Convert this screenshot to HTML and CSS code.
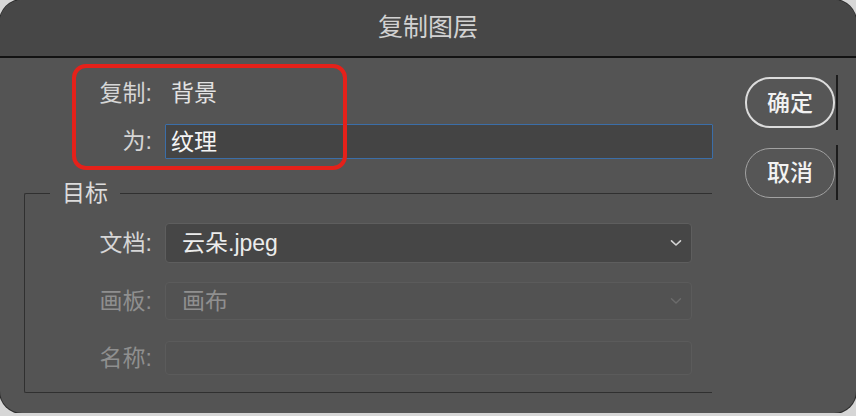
FILE: index.html
```html
<!DOCTYPE html>
<html lang="zh-CN">
<head>
<meta charset="UTF-8" />
<meta name="viewport" content="width=device-width, initial-scale=1" />
<title>复制图层</title>
<link rel="stylesheet" href="styles.css">
</head>
<body>

<div class="dialog">
  <div class="titlebar">复制图层</div>

  <div class="main">
    <div class="form">
      <div class="row row-top">
        <span class="label">复制:</span>
        <span class="value">背景</span>
      </div>
      <div class="row row-top">
        <label class="label" for="layerName">为:</label>
        <input class="text-input" id="layerName" type="text" value="纹理" />
      </div>

      <fieldset class="group">
        <legend>目标</legend>
        <div class="row row-doc">
          <span class="label">文档:</span>
          <div class="select">
            <span class="select-text">云朵.jpeg</span>
            <svg class="chevron" width="12" height="8" viewBox="0 0 12 8"><path d="M1.5 1.8 L6 6 L10.5 1.8" fill="none" stroke="#d4d4d4" stroke-width="1.6" stroke-linecap="round" stroke-linejoin="round"/></svg>
          </div>
        </div>
        <div class="row row-board disabled">
          <span class="label">画板:</span>
          <div class="select">
            <span class="select-text">画布</span>
            <svg class="chevron" width="12" height="8" viewBox="0 0 12 8"><path d="M1.5 1.8 L6 6 L10.5 1.8" fill="none" stroke="#6c6c6c" stroke-width="1.4" stroke-linecap="round" stroke-linejoin="round"/></svg>
          </div>
        </div>
        <div class="row row-name disabled">
          <span class="label">名称:</span>
          <div class="select empty"></div>
        </div>
      </fieldset>
    </div>

    <div class="buttons">
      <div class="btn-wrap">
        <button class="btn btn-default">确定</button>
        <span class="tick"></span>
      </div>
      <div class="btn-wrap">
        <button class="btn">取消</button>
        <span class="tick"></span>
      </div>
    </div>
  </div>

  <!-- red annotation frame -->
  <div class="mark"></div>
</div>

</body>
</html>
```

FILE: styles.css
```css
html {
  background: #d6d6d6;
}
body {
  margin: 0;
  font-family: "Liberation Sans", "Noto Sans CJK SC", sans-serif;
  color: #d8d8d8;
}
.dialog {
  position: relative;
  width: 856px;
  height: 413px;
  background: #545454;
  border-radius: 22px;
  overflow: hidden;
  box-shadow: 0 0 0 1px #2c2c2c;
}
.titlebar {
  height: 56px;
  line-height: 54px;
  background: #474747;
  border-bottom: 2px solid #121212;
  text-align: center;
  font-size: 25px;
  color: #d2d2d2;
}
.main {
  display: flex;
}
.form {
  width: 713px;
  padding: 18px 0 0 24px;
  box-sizing: border-box;
}
.row {
  display: flex;
  align-items: center;
  font-size: 23px;
}
.label {
  width: 128px;
  text-align: right;
  margin-right: 13px;
  padding-bottom: 5px;
  color: #d6d6d6;
}
.row-top {
  height: 35px;
}
.row-top + .row-top {
  margin-top: 13px;
}
.value {
  margin-left: 6px;
  padding-bottom: 5px;
  color: #e2e2e2;
}
.text-input {
  width: 548px;
  height: 35px;
  box-sizing: border-box;
  background: #444444;
  border: 1.5px solid #3b6ea8;
  border-radius: 1px;
  padding: 0 5px 4px;
  font: inherit;
  font-size: 23px;
  color: #f4f4f4;
  outline: none;
}

.group {
  width: 688px;
  box-sizing: border-box;
  margin: 22px 0 0 0;
  padding: 0 0 17px 0;
  border: 1px solid #303030;
  border-right: none;
  border-radius: 2px 0 0 2px;
}
.group legend {
  margin-left: 25px;
  padding: 0 12px;
  font-size: 23px;
  line-height: 24px;
  color: #dcdcdc;
}
.group .label {
  width: 127px;
}
.select {
  width: 527px;
  height: 100%;
  box-sizing: border-box;
  display: flex;
  align-items: center;
  justify-content: space-between;
  padding: 0 9px 0 16px;
  background: #464646;
  border: 1px solid #5e5e5e;
  border-radius: 4px;
  color: #ececec;
}
.select-text {
  padding-bottom: 4px;
}
.row-doc {
  height: 40px;
  margin-top: 18px;
}
.row-board {
  height: 38px;
  margin-top: 19px;
}
.row-name {
  height: 34px;
  margin-top: 21px;
}
.disabled .label,
.disabled .select {
  color: #8f8f8f;
}
.disabled .select {
  background: #525252;
  border-color: #5b5b5b;
}

.buttons {
  margin-left: 32px;
  padding-top: 17px;
  display: flex;
  flex-direction: column;
  gap: 15px;
}
.btn-wrap {
  display: flex;
  align-items: center;
  height: 55px;
  gap: 1px;
}
.btn {
  width: 90px;
  height: 50px;
  box-sizing: border-box;
  background: #565656;
  border: 1.5px solid #a2a2a2;
  border-radius: 25px;
  padding: 0 0 3px;
  font-family: "Liberation Sans", "Noto Sans CJK SC", sans-serif;
  font-size: 23px;
  font-weight: 500;
  color: #f2f2f2;
}
.btn-default {
  height: 51px;
  border: 2px solid #dcdcdc;
}
.tick {
  width: 2px;
  height: 55px;
  background: #1c1c1c;
}

.mark {
  position: absolute;
  left: 72px;
  top: 64px;
  width: 275px;
  height: 106px;
  box-sizing: border-box;
  border: 4px solid #e5211a;
  border-radius: 14px;
}
```
